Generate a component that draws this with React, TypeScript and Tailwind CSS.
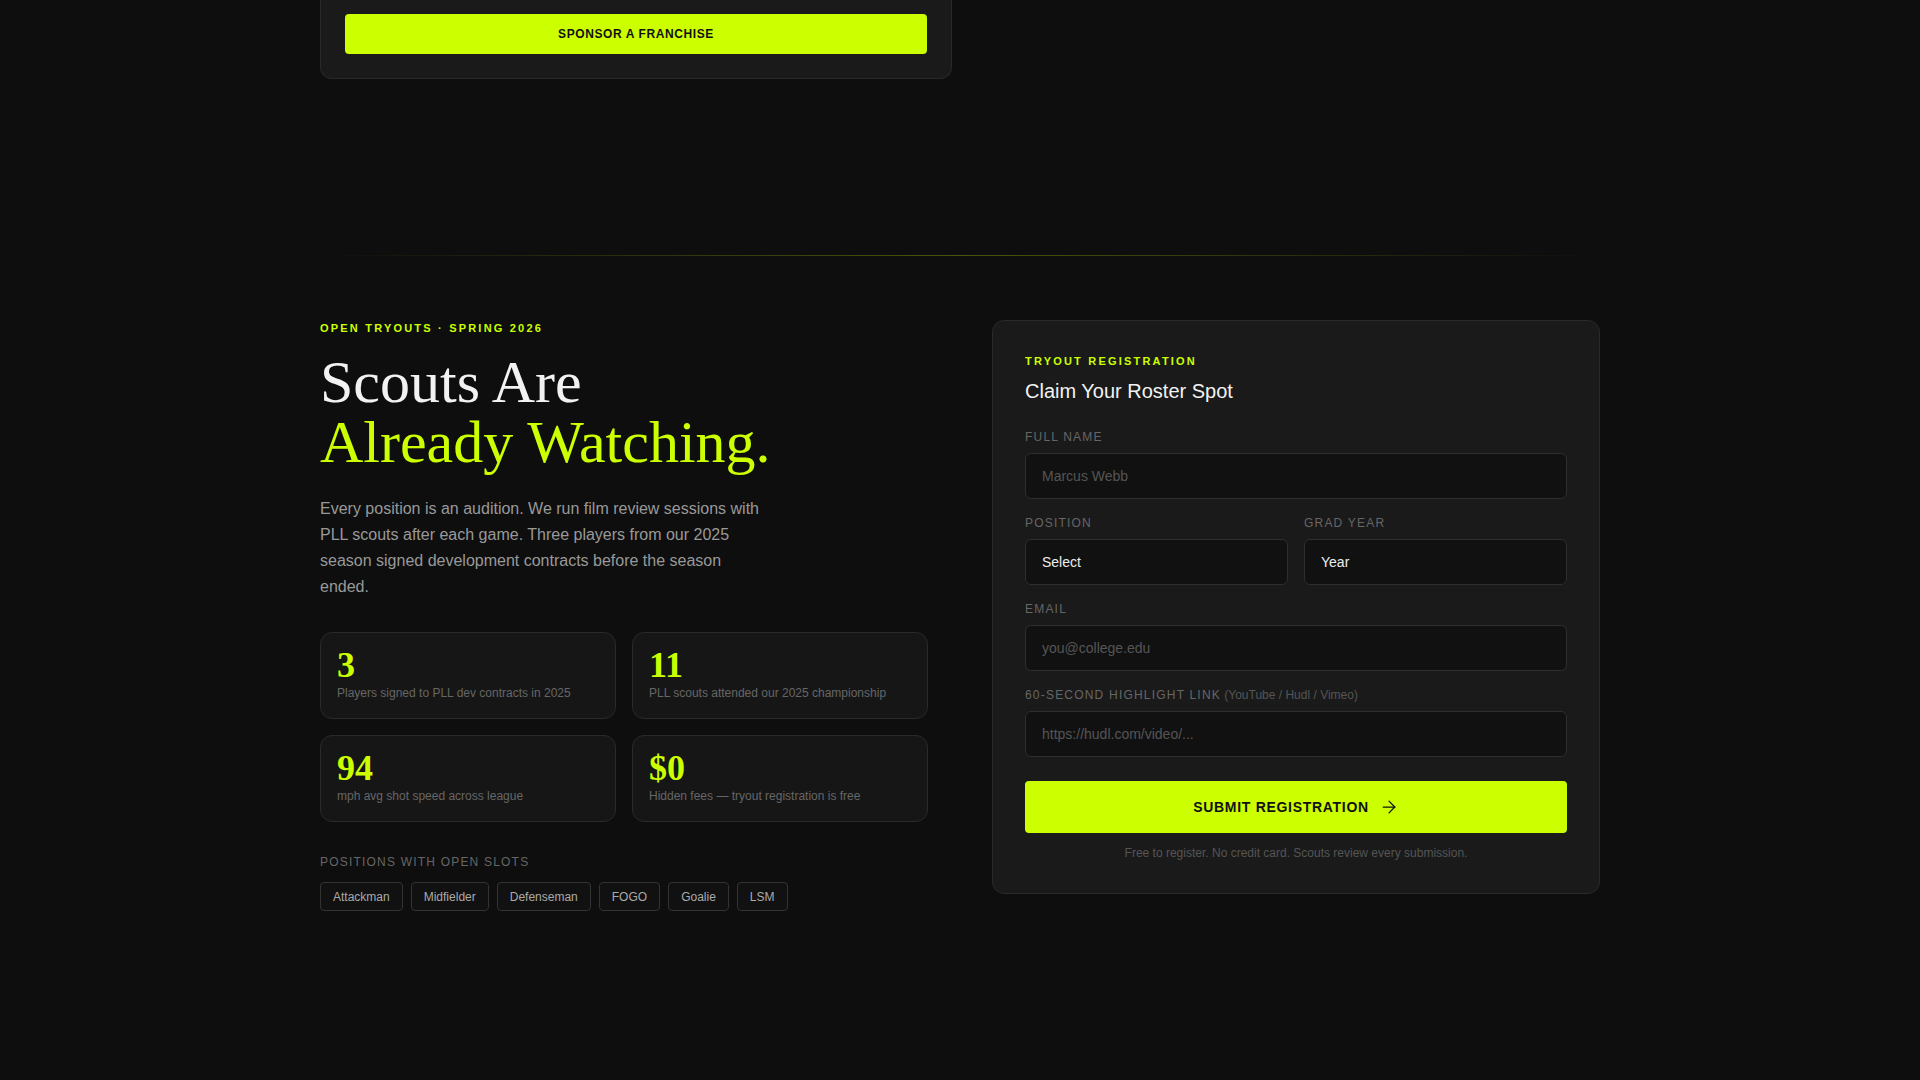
import { ArrowRight } from 'lucide-react';

const stats = [
  { value: '3', label: 'Players signed to PLL dev contracts in 2025' },
  { value: '11', label: 'PLL scouts attended our 2025 championship' },
  { value: '94', label: 'mph avg shot speed across league' },
  { value: '$0', label: 'Hidden fees — tryout registration is free' },
];

const positions = ['Attackman', 'Midfielder', 'Defenseman', 'FOGO', 'Goalie', 'LSM'];

const labelClass = 'mb-2 block text-xs uppercase leading-4 tracking-widest text-[#666]';
const fieldClass =
  'h-[46px] w-full rounded-md border border-[#2e2e2e] bg-[#111] px-4 text-sm text-[#eee] outline-none placeholder:text-[#555]';

function Field({ label, hint, placeholder }: { label: string; hint?: string; placeholder: string }) {
  return (
    <div>
      <label className={labelClass}>
        {label}
        {hint && <span className="normal-case tracking-normal text-[#555]"> {hint}</span>}
      </label>
      <input className={fieldClass} placeholder={placeholder} />
    </div>
  );
}

function SelectField({ label, value }: { label: string; value: string }) {
  return (
    <div>
      <label className={labelClass}>{label}</label>
      <select className={`${fieldClass} appearance-none`} defaultValue={value}>
        <option>{value}</option>
      </select>
    </div>
  );
}

export default function App() {
  return (
    <div className="min-h-screen bg-[#0e0e0e] font-['Liberation_Sans',Arial,sans-serif]">
      <div className="mx-auto max-w-[1280px]">
        {/* tail of the sponsor cards */}
        <div className="grid grid-cols-2 gap-4">
          <div className="rounded-b-xl border border-t-0 border-[#2a2a2a] bg-[#1a1a1a] px-6 pb-6 pt-3.5">
            <button className="h-10 w-full rounded bg-[#ccff00] text-xs font-bold uppercase tracking-wider text-[#111]">
              Sponsor a Franchise
            </button>
          </div>
        </div>

        <div className="mt-44 h-px bg-linear-to-r from-transparent via-[#ccff00]/30 to-transparent" />

        <section className="grid grid-cols-2 items-start gap-16 pt-16">
          <div>
            <p className="mb-4 text-[11px] font-bold uppercase leading-4 tracking-[0.2em] text-[#ccff00]">
              Open Tryouts · Spring 2026
            </p>
            <h2 className="mb-6 font-['Liberation_Serif',serif] text-6xl leading-none text-[#f2f2f2]">
              Scouts Are
              <br />
              <span className="text-[#ccff00]">Already Watching.</span>
            </h2>
            <p className="max-w-md text-base leading-relaxed text-[#999]">
              Every position is an audition. We run film review sessions with PLL scouts after each game. Three
              players from our 2025 season signed development contracts before the season ended.
            </p>

            <div className="mt-8 grid grid-cols-2 gap-4">
              {stats.map((s) => (
                <div key={s.value} className="rounded-xl border border-[#2a2a2a] bg-[#161616] px-4 pb-[17px] pt-4">
                  <div className="font-['Liberation_Serif',serif] text-4xl font-bold leading-8 text-[#ccff00]">
                    {s.value}
                  </div>
                  <div className="mt-1 text-xs leading-4 text-[#666]">{s.label}</div>
                </div>
              ))}
            </div>

            <p className="mb-3 mt-8 text-xs uppercase leading-4 tracking-widest text-[#666]">
              Positions with open slots
            </p>
            <div className="flex gap-2">
              {positions.map((p) => (
                <span
                  key={p}
                  className="flex h-[29px] items-center rounded border border-[#333] bg-[#111] px-3 text-xs text-[#aaa]"
                >
                  {p}
                </span>
              ))}
            </div>
          </div>

          <div className="rounded-xl border border-[#2a2a2a] bg-[#1a1a1a] p-8">
            <p className="text-[11px] font-bold uppercase leading-4 tracking-[0.2em] text-[#ccff00]">
              Tryout Registration
            </p>
            <h3 className="mt-2 text-xl leading-7 text-[#f2f2f2]">Claim Your Roster Spot</h3>

            <div className="mt-6 space-y-4">
              <Field label="Full Name" placeholder="Marcus Webb" />
              <div className="grid grid-cols-2 gap-4">
                <SelectField label="Position" value="Select" />
                <SelectField label="Grad Year" value="Year" />
              </div>
              <Field label="Email" placeholder="you@college.edu" />
              <Field label="60-Second Highlight Link" hint="(YouTube / Hudl / Vimeo)" placeholder="https://hudl.com/video/..." />
            </div>

            <button className="mt-6 flex h-[52px] w-full items-center justify-center gap-2.5 rounded bg-[#ccff00] text-sm font-bold uppercase tracking-wider text-[#111]">
              Submit Registration
              <ArrowRight size={20} strokeWidth={1.5} />
            </button>
            <p className="mt-3 text-center text-xs leading-4 text-[#555]">
              Free to register. No credit card. Scouts review every submission.
            </p>
          </div>
        </section>
      </div>
    </div>
  );
}
